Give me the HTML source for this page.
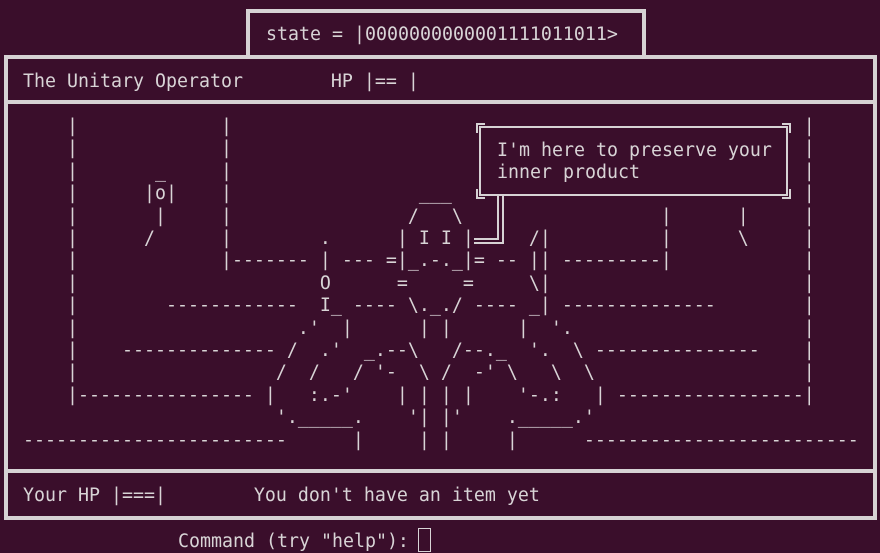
<!DOCTYPE html>
<html><head><meta charset="utf-8"><style>
html,body{margin:0;padding:0;background:#3a0e2b;width:880px;height:553px;overflow:hidden;position:relative}
.t{position:absolute;margin:0;font-family:"DejaVu Sans Mono","Liberation Mono",monospace;font-size:18.27px;line-height:22px;color:#d8d4d6;white-space:pre}
.b{position:absolute;border:4px solid #d6d2d4;box-sizing:border-box}
.h{position:absolute;height:4px;background:#d6d2d4}
</style></head><body>
<div class="b" style="left:246px;top:9px;width:400px;height:52px"></div>
<div class="b" style="left:4px;top:55px;width:873px;height:465px;background:#3a0e2b"></div>
<div class="h" style="left:4px;top:100px;width:873px"></div>
<div class="h" style="left:4px;top:469px;width:873px"></div>
<pre class="t" style="left:266px;top:24px">state = |0000000000001111011011&gt;</pre>
<pre class="t" style="left:23px;top:71px">The Unitary Operator        HP |== |</pre>
<pre class="t" style="left:23px;top:485px">Your HP |===|        You don't have an item yet</pre>
<pre class="t" style="left:178px;top:531px">Command (try "help"): </pre>
<div style="position:absolute;left:418px;top:528px;width:11px;height:22px;border:1px solid #d8d4d6"></div>
<pre class="t" style="left:23px;top:116px;line-height:22.4px">    |             |                                                    |
    |             |                                                    |
    |       _     |                                                    |
    |      |o|    |                 ___                                |
    |       |     |                /   \                  |      |     |
    |      /      |        .      | I I |     /|          |      \     |
    |             |------- | --- =|_.-._|= -- || ---------|            |
    |                      O      =     =     \|                       |
    |        ------------  I_ ---- \._./ ---- _| --------------        |
    |                    .'  |      | |      |  '.                     |
    |    -------------- /  .'  _.--\   /--._  '.  \ ---------------    |
    |                  /  /   / '-  \ /  -' \   \  \                   |
    |---------------- |   :.-'    | | | |    '-.:   | -----------------|
                       '._____.    '| |'    ._____.'
------------------------      |     | |     |      -------------------------</pre>
<svg style="position:absolute;left:0;top:0" width="880" height="553">
<g stroke="#d6d2d4" stroke-width="2" fill="none">
<rect x="480" y="127" width="307" height="68" fill="#3a0e2b"/>
<path d="M477 133V124H485M782 124H790V133M477 189V198H485M782 198H790V189"/>
<path d="M498 196V239H474M503 196V243H474"/>
</g>
<text x="497" y="156" font-family="DejaVu Sans Mono, monospace" font-size="18.27" fill="#d8d4d6" xml:space="preserve">I'm here to preserve your</text>
<text x="497" y="178" font-family="DejaVu Sans Mono, monospace" font-size="18.27" fill="#d8d4d6" xml:space="preserve">inner product</text>
</svg>
</body></html>
